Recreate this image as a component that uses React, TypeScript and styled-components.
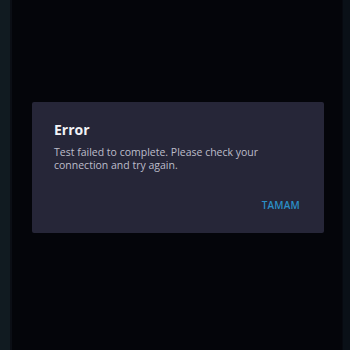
import React from 'react';
import styled, { createGlobalStyle } from 'styled-components';

const GlobalStyle = createGlobalStyle`
	html, body {
		margin: 0;
		padding: 0;
		background: #04050a;
	}
	#root {
		width: 350px;
		height: 350px;
	}
`;

export default function App() {
	return (
		<>
			<GlobalStyle />
			<Screen>
				<LeftEdge />
				<Backdrop>
					<Dialog>
						<Title>Error</Title>
						<Message>
							Test failed to complete. Please check your
							<br />
							connection and try again.
						</Message>
						<Actions>
							<ActionButton>TAMAM</ActionButton>
						</Actions>
					</Dialog>
				</Backdrop>
				<RightEdge />
			</Screen>
		</>
	);
}

const Screen = styled.div`
	display: flex;
	width: 350px;
	height: 350px;
	background: #04050a;
	overflow: hidden;
`;

const LeftEdge = styled.div`
	width: 10px;
	flex-shrink: 0;
	background: #111b21;
	border-right: 2px solid #0b0e15;
`;

const RightEdge = styled.div`
	width: 7px;
	flex-shrink: 0;
	background: #0a1017;
	border-left: 1px solid #070910;
`;

const Backdrop = styled.div`
	flex: 1;
	display: flex;
	align-items: flex-start;
	padding: 102px 16px 0 20px;
`;

const Dialog = styled.div`
	width: 292px;
	height: 131px;
	box-sizing: border-box;
	background: #262638;
	border-radius: 2px;
	padding: 19px 22px 0 22px;
	display: flex;
	flex-direction: column;
	font-family: 'Open Sans', 'Liberation Sans', sans-serif;
`;

const Title = styled.h2`
	margin: 0;
	font-size: 14px;
	font-weight: 700;
	line-height: 18px;
	color: #f2f2f6;
`;

const Message = styled.p`
	margin: 7px 0 0 0;
	font-size: 10.5px;
	line-height: 13px;
	color: #bdbdca;
`;

const Actions = styled.div`
	display: flex;
	justify-content: flex-end;
	margin-top: 26px;
`;

const ActionButton = styled.button`
	border: none;
	background: transparent;
	padding: 0 2px 0 0;
	font-family: 'Open Sans', 'Liberation Sans', sans-serif;
	font-size: 10px;
	font-weight: 600;
	letter-spacing: 0.2px;
	color: #2b8ec6;
	cursor: pointer;
`;
